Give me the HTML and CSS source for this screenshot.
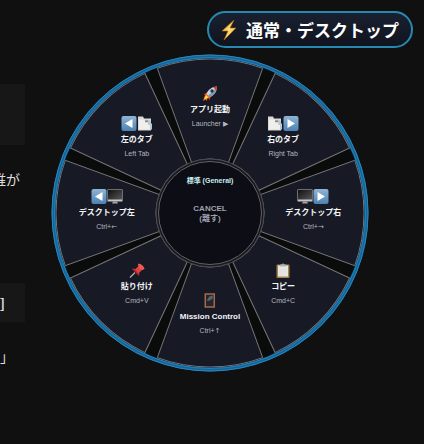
FILE: index.html
```html
<!DOCTYPE html>
<html lang="ja">
<head>
  <meta charset="UTF-8">
  <meta name="viewport" content="width=device-width, initial-scale=1.0">
  <title>通常・デスクトップ</title>
  <link rel="stylesheet" href="styles.css">
</head>
<body>
  <!-- Shared icons -->
  <svg class="defs" width="0" height="0">
    <defs>
      <linearGradient id="blue" x1="0" y1="0" x2="0" y2="1">
        <stop offset="0" stop-color="#8fb5d6"/>
        <stop offset="1" stop-color="#4c82b2"/>
      </linearGradient>
      <linearGradient id="glass" x1="0" y1="0" x2="1" y2="1">
        <stop offset="0" stop-color="#111"/>
        <stop offset="1" stop-color="#565656"/>
      </linearGradient>
      <linearGradient id="gold" x1="0" y1="0" x2="1" y2="1">
        <stop offset="0" stop-color="#d98a12"/>
        <stop offset="0.5" stop-color="#ffe27a"/>
        <stop offset="1" stop-color="#e08a10"/>
      </linearGradient>
      <symbol id="icon-prev" viewBox="0 0 16 16">
        <rect x="0.5" y="0.5" width="15" height="15" rx="2" fill="url(#blue)"/>
        <path d="M11.500 3.500v9L4 8z" fill="#fff"/>
      </symbol>
      <symbol id="icon-next" viewBox="0 0 16 16">
        <rect x="0.5" y="0.5" width="15" height="15" rx="2" fill="url(#blue)"/>
        <path d="M4.500 3.500v9L12 8z" fill="#fff"/>
      </symbol>
      <symbol id="icon-tabs" viewBox="0 0 16 16">
        <path d="M1 1h5l1 2h7v12H1z" fill="#d9d9d6"/>
        <path d="M2 4h11v10H2z" fill="#efefed"/>
        <path d="M8 4h4l2 2v4l-3-1V7H8z" fill="#c3c6c8"/>
        <path d="M8 5h3v1.500H8z" fill="#85898c"/>
        <path d="M13 8h2v6h-2z" fill="#b4c8d6"/>
      </symbol>
      <symbol id="icon-screen" viewBox="0 0 16 16">
        <rect x="0.5" y="1" width="15" height="12" fill="#c4c4c4"/>
        <rect x="1" y="1.500" width="14" height="9.500" fill="url(#glass)"/>
        <path d="M6 13h4l1 2H5z" fill="#a6a6a6"/>
      </symbol>
    </defs>
  </svg>

  <header class="top-bar">
    <div class="mode-badge">
      <svg class="bolt" viewBox="0 0 18 22">
        <path d="M14 1L2 12h6l-4 9L16 9h-6z" fill="url(#gold)" stroke="#b36a08" stroke-width="0.6"/>
      </svg>
      <span>通常・デスクトップ</span>
    </div>
  </header>

  <main class="stage">
    <!-- Document behind the menu -->
    <article class="document">
      <div class="block block-tall"></div>
      <p class="line">誰が</p>
      <div class="block block-short"><b>]</b></div>
      <p class="line line-quote">」</p>
    </article>

    <!-- Pie menu -->
    <nav class="wheel">
      <svg class="wheel-shape" viewBox="-159 -159 318 318">
        <defs>
          <path id="slice" d="M-18.5 -50.7L-52.7 -144.7A154 154 0 0 1 52.7 -144.7L18.5 -50.7A54 54 0 0 0 -18.5 -50.7Z"/>
        </defs>
        <circle r="156" fill="#0a0b0b"/>
        <g fill="#171924" stroke="#767678" stroke-width="1">
          <use href="#slice"/>
          <use href="#slice" transform="rotate(45)"/>
          <use href="#slice" transform="rotate(90)"/>
          <use href="#slice" transform="rotate(135)"/>
          <use href="#slice" transform="rotate(180)"/>
          <use href="#slice" transform="rotate(225)"/>
          <use href="#slice" transform="rotate(270)"/>
          <use href="#slice" transform="rotate(315)"/>
        </g>
        <circle r="54" fill="#17181f" stroke="#4c4c50"/>
        <circle r="51.5" fill="#0d0d15" stroke="#626266"/>
        <circle r="156.5" fill="none" stroke="#12659b" stroke-width="4"/>
        <circle r="158" fill="none" stroke="#2b86ba" stroke-width="1"/>
        <circle r="155.5" fill="none" stroke="#277fb0" stroke-width="1"/>
      </svg>

      <button type="button" class="item north">
        <span class="icons">
          <svg viewBox="0 0 16 16">
            <path d="M5 7L1.500 9l3 1zM9 11l-2 4-1-4z" fill="#d5342b"/>
            <path d="M4 9C6 4 10 1 15 1c0 5-3 9-8 11z" fill="#c5d3df"/>
            <path d="M6 10c3-2 6-5 9-9 0 5-3 9-8 11z" fill="#7f98ad"/>
            <path d="M11 1.500L15 1l-.5 4z" fill="#d5342b"/>
            <circle cx="10" cy="5.500" r="1.700" fill="#243646"/>
            <path d="M4 8l4 4-2.500 1-1 2.500-1-1.500-2.500 1.500 1-3.500z" fill="#f0641c"/>
            <path d="M4 9.500l2.500 2.500L2 14z" fill="#ffe04d"/>
          </svg>
        </span>
        <span class="name">アプリ起動</span>
        <span class="key">Launcher <i>▶</i></span>
      </button>

      <button type="button" class="item north-east">
        <span class="icons">
          <svg><use href="#icon-tabs"/></svg>
          <svg><use href="#icon-next"/></svg>
        </span>
        <span class="name">右のタブ</span>
        <span class="key">Right Tab</span>
      </button>

      <button type="button" class="item east">
        <span class="icons">
          <svg><use href="#icon-screen"/></svg>
          <svg><use href="#icon-next"/></svg>
        </span>
        <span class="name">デスクトップ右</span>
        <span class="key">Ctrl+<i>→</i></span>
      </button>

      <button type="button" class="item south-east">
        <span class="icons">
          <svg viewBox="0 0 16 16">
            <rect x="1.500" y="2" width="13" height="13.500" rx="1" fill="#a58050"/>
            <rect x="3" y="3" width="10" height="11" fill="#e6e6e3"/>
            <path d="M5 2h2l1-1.500L9 2h2v2H5z" fill="#a9b2b8"/>
            <path d="M4.500 7h7M4.500 9.500h7M4.500 12h5" stroke="#d8d8d5" stroke-width="0.6"/>
          </svg>
        </span>
        <span class="name">コピー</span>
        <span class="key">Cmd+C</span>
      </button>

      <button type="button" class="item south">
        <span class="icons">
          <svg viewBox="0 0 16 16">
            <rect x="3.500" y="1.500" width="9" height="13" fill="#23272d" stroke="#a5694a" stroke-width="1.500"/>
            <path d="M5 8l2.500-4L11 3v3L7 8.500z" fill="#59626c"/>
          </svg>
        </span>
        <span class="name">Mission Control</span>
        <span class="key">Ctrl+<i>↑</i></span>
      </button>

      <button type="button" class="item south-west">
        <span class="icons">
          <svg viewBox="0 0 16 16">
            <path d="M6 10l-5 5" stroke="#a9b0b5" stroke-width="1.200"/>
            <path d="M3 6.500c2-1 4 0 5.500 1.500s2.500 3.500 1.500 5.500z" fill="#b8292c"/>
            <path d="M6 7l4-4 4 3.500L9.500 11z" fill="#e2413f"/>
            <path d="M9 1.500c2-1 6 2 6.500 5l-2 1C11.500 7 9 4.500 9 1.500z" fill="#ee5a54"/>
          </svg>
        </span>
        <span class="name">貼り付け</span>
        <span class="key">Cmd+V</span>
      </button>

      <button type="button" class="item west">
        <span class="icons">
          <svg><use href="#icon-prev"/></svg>
          <svg><use href="#icon-screen"/></svg>
        </span>
        <span class="name">デスクトップ左</span>
        <span class="key">Ctrl+<i>←</i></span>
      </button>

      <button type="button" class="item north-west">
        <span class="icons">
          <svg><use href="#icon-prev"/></svg>
          <svg><use href="#icon-tabs"/></svg>
        </span>
        <span class="name">左のタブ</span>
        <span class="key">Left Tab</span>
      </button>

      <button type="button" class="cancel">
        <span class="group">標準 (General)</span>
        <span>CANCEL</span>
        <span>(離す)</span>
      </button>
    </nav>
  </main>
</body>
</html>
```

FILE: styles.css
```css
* {
  margin: 0;
  padding: 0;
  box-sizing: border-box;
}

body {
  min-height: 100vh;
  background: #101010;
  border-bottom: 2px solid #080508;
  color: #ddd;
  font-family: "Liberation Sans", "Noto Sans CJK JP", "DejaVu Sans", sans-serif;
  overflow: hidden;
}

.defs {
  position: absolute;
}

/* Mode badge */
.top-bar {
  display: flex;
  justify-content: flex-end;
  padding: 11px 11px 0 0;
}

.mode-badge {
  display: flex;
  align-items: center;
  gap: 8px;
  height: 37px;
  padding: 0 12px 0 11px;
  border: 2px solid #2589b0;
  border-radius: 19px;
  background: linear-gradient(#192030, #10141f);
  color: #fff;
  font-family: "Noto Sans CJK JP", sans-serif;
  font-size: 17px;
  font-weight: bold;
  line-height: 24px;
}

.bolt {
  width: 18px;
  height: 22px;
}

.stage {
  display: flex;
  align-items: flex-start;
  gap: 26px;
  padding-top: 6px;
}

/* Document behind the menu */
.document {
  width: 25px;
  padding-top: 30px;
  font-family: "Noto Sans CJK JP", sans-serif;
  font-size: 14px;
  line-height: 24px;
}

.block,
.line {
  display: flex;
  justify-content: flex-end;
  overflow: hidden;
  white-space: nowrap;
}

.block {
  align-items: center;
  background: #171717;
}

.block-tall {
  height: 61px;
}

.block-short {
  height: 39px;
  padding-right: 20px;
}

.line {
  margin: 22px 0 92px;
  padding-right: 5px;
}

.line-quote {
  padding-right: 11px;
}

/* Pie menu */
.wheel {
  position: relative;
  flex: none;
  width: 318px;
  height: 318px;
}

.wheel-shape {
  display: block;
  width: 100%;
  height: 100%;
}

.item,
.cancel {
  position: absolute;
  transform: translate(-50%, -50%);
  display: flex;
  flex-direction: column;
  align-items: center;
  border: none;
  background: none;
  font-family: inherit;
  white-space: nowrap;
  cursor: pointer;
}

.icons {
  display: flex;
  height: 16px;
}

.icons svg {
  width: 16px;
  height: 16px;
}

.name {
  color: #f4f5f9;
  font-size: 8px;
  font-weight: bold;
  line-height: 15px;
}

.key {
  color: #b4b7c0;
  font-size: 7px;
  line-height: 14px;
}

.key i {
  font-family: "DejaVu Sans", sans-serif;
  font-style: normal;
  line-height: 1;
}

.north { left: 50%; top: 17%; }
.north-east { left: 73%; top: 26.5%; }
.east { left: 82.5%; top: 49.5%; }
.south-east { left: 73%; top: 72.5%; }
.south { left: 50%; top: 82%; }
.south-west { left: 27%; top: 72.5%; }
.west { left: 17.5%; top: 49.5%; }
.north-west { left: 27%; top: 26.5%; }

.cancel {
  left: 50%;
  top: 50%;
  width: 102px;
  height: 102px;
  padding-top: 14px;
  border-radius: 50%;
  color: #9ea1ae;
  font-size: 8px;
  font-weight: bold;
  line-height: 10px;
}

.group {
  margin-bottom: 18px;
  color: #c9edf2;
  font-size: 7px;
}
```
